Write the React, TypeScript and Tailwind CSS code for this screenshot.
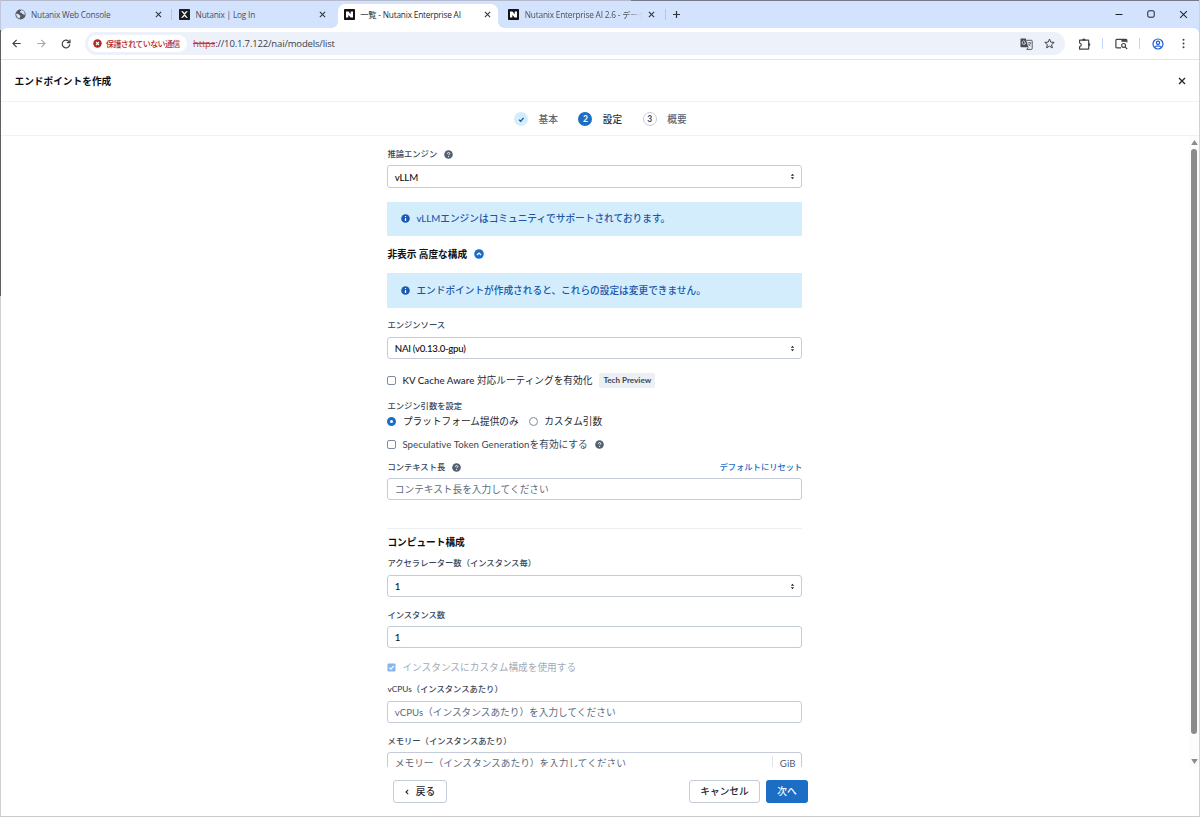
import type { ReactNode } from "react";
import clsx from "clsx";

const UI_FONT = "[font-family:Lato,'Noto_Sans_CJK_JP',sans-serif]";
const CHROME_FONT = "[font-family:'Open_Sans','Noto_Sans_CJK_JP',sans-serif]";

/* ---------- icons ---------- */

function CloseIcon({ size = 7, width = 1.1 }: { size?: number; width?: number }) {
  return (
    <svg width={size} height={size} viewBox="0 0 8 8" fill="none" stroke="currentColor" strokeWidth={width}>
      <path d="M1 1l6 6M7 1L1 7" />
    </svg>
  );
}

function GlobeIcon() {
  return (
    <svg width="11" height="11" viewBox="0 0 11 11">
      <circle cx="5.5" cy="5.5" r="5.1" fill="#54585e" />
      <path d="M1.1 4.8c1.500-.1 2.600.2 3 .9.400.7 1.300.5 1.300 1.300 0 .9-.7 1-.7 2.600C2.500 9.200 1.100 7.200 1.100 4.800z" fill="#d3e3fd" />
      <path d="M6.200 1.100c.2.600-.2 1-.9 1.200-.6.300-.4.900.1 1.200.6.300 1.200.1 1.500.8.300.8 1 .5 1.500 1.100.3.500.8.500 1.500.4C9.900 3.300 8.500 1.300 6.200 1.100z" fill="#d3e3fd" />
    </svg>
  );
}

function NutanixX() {
  return (
    <svg width="11" height="11" viewBox="0 0 11 11">
      <rect width="11" height="11" rx=".8" fill="#1b1c22" />
      <path d="M2.100 2.300h1.700l1.700 1.700 1.700-1.700h1.700L6.300 4.900h-1.600zM2.100 8.700h1.700l1.700-1.700 1.700 1.700h1.700L6.300 6.100h-1.600z" fill="#fff" />
      <path d="M4.700 4.800h1.600v1.400H4.700z" fill="#c9cacd" />
    </svg>
  );
}

function NutanixN() {
  return (
    <svg width="11" height="11" viewBox="0 0 11 11">
      <rect width="11" height="11" rx=".8" fill="#131317" />
      <path d="M2 2.500h2.500l2.200 2.700V2.500H9v6.100H6.700L4.300 5.900v2.700H2z" fill="#fff" />
    </svg>
  );
}

function HelpIcon() {
  return (
    <svg width="9" height="9" viewBox="0 0 9 9">
      <circle cx="4.500" cy="4.500" r="4.300" fill="#526072" />
      <path d="M3.300 3.700c0-1.500 2.500-1.500 2.500-.1 0 .8-1.200.8-1.200 1.600" fill="none" stroke="#fff" strokeWidth="1" />
      <circle cx="4.600" cy="6.500" r=".6" fill="#fff" />
    </svg>
  );
}

function InfoIcon() {
  return (
    <svg width="9" height="9" viewBox="0 0 9 9">
      <circle cx="4.500" cy="4.500" r="4.300" fill="#1a5bb0" />
      <path d="M4.500 1.900v1.200M4.500 4v3" stroke="#fff" strokeWidth="1.200" />
    </svg>
  );
}

function SelectArrows() {
  return (
    <svg width="5" height="7" viewBox="0 0 5 7" fill="#1f2732">
      <path d="M2.500.700L4.200 2.700H.800zM2.500 6.300L.800 4.300h3.400z" />
    </svg>
  );
}

function TranslateIcon() {
  return (
    <svg width="13" height="12" viewBox="0 0 13 12">
      <path d="M.5.500h5.300l2.400 8.800H1.300a.8.800 0 0 1-.8-.8z" fill="#474b50" />
      <path d="M6.500 2.300h5a.7.700 0 0 1 .7.700v7.700a.7.700 0 0 1-.7.700H6.800l1.400-2.100" fill="none" stroke="#474b50" strokeWidth=".9" />
      <path d="M5.700 4.800H4.200M5.500 4.800A1.700 1.700 0 1 1 5 3.500" fill="none" stroke="#ecf1fa" strokeWidth=".8" />
      <path d="M7.600 4.800h3.600M9.400 4v.8M10.700 4.800c-.3 1.500-1.200 2.500-2.300 3.200M8.300 5.700c.5 1.100 1.200 1.700 2.200 2.300" fill="none" stroke="#474b50" strokeWidth=".7" />
    </svg>
  );
}

function StarIcon() {
  return (
    <svg width="11" height="11" viewBox="0 0 11 11" fill="none" stroke="#3f4348" strokeWidth="1">
      <path d="M5.500 1l1.300 3.100 3.400.3-2.600 2.200.8 3.300-2.900-1.800-2.900 1.800.8-3.300L.800 4.400l3.400-.3z" />
    </svg>
  );
}

function PuzzleIcon() {
  return (
    <svg width="13" height="12" viewBox="0 0 13 12" fill="none" stroke="#3f4348" strokeWidth="1.200">
      <path d="M1.600 2.200h8.600a.5.500 0 0 1 .5.500v8a.5.500 0 0 1-.5.500H1.600V8.500c2.200-.2 2.200-3.300 0-3.500z" strokeLinejoin="round" />
      <path d="M4.500 2.200a1.400 1.400 0 0 1 2.800 0zM10.700 5.300a1.300 1.300 0 0 1 0 2.600z" fill="#3f4348" strokeWidth=".5" />
    </svg>
  );
}

function TabSearchIcon() {
  return (
    <svg width="13" height="12" viewBox="0 0 13 12" fill="none" stroke="#3f4348" strokeWidth="1.200">
      <path d="M6 9.900H1.800a.9.900 0 0 1-.9-.9V2.300a.9.900 0 0 1 .9-.9h9.100a.9.900 0 0 1 .9.900v2.200" />
      <path d="M6.400 1.200h5.400v2.600H6.400z" fill="#3f4348" stroke="none" />
      <circle cx="8.600" cy="7.400" r="1.900" />
      <path d="M10 8.800l2.300 2.300" />
    </svg>
  );
}

function ProfileIcon() {
  return (
    <svg width="12" height="12" viewBox="0 0 12 12" fill="none" stroke="#1a5fd6" strokeWidth="1.200">
      <circle cx="6" cy="6" r="5" />
      <circle cx="6" cy="4.800" r="1.600" />
      <path d="M2.600 9.300c1.800-2 5-2 6.800 0" />
    </svg>
  );
}

/* ---------- browser frame ---------- */

type TabProps = { icon: ReactNode; title: string; active?: boolean; divider?: boolean; fade?: boolean };

function BrowserTab({ icon, title, active, divider, fade }: TabProps) {
  return (
    <div className="flex h-full w-[164.6px] shrink-0 items-center">
      <div
        className={clsx(
          "relative flex h-full w-[160px] items-center pb-[3px] pl-[5.500px]",
          active && "rounded-t-[7px] bg-white"
        )}
      >
        {active && (
          <>
            <span className="absolute bottom-0 -left-[6px] h-[6px] w-[6px] bg-[radial-gradient(circle_at_0_0,#d3e3fd_5.500px,#fff_6px)]" />
            <span className="absolute -right-[6px] bottom-0 h-[6px] w-[6px] bg-[radial-gradient(circle_at_100%_0,#d3e3fd_5.500px,#fff_6px)]" />
          </>
        )}
        {icon}
        <span
          className={clsx(
            "ml-[5.500px] w-[118px] text-[8.300px] leading-[14px] tracking-[-0.200px] whitespace-nowrap",
            active ? "text-[#26292d]" : "text-[#4a4f57]",
            fade && "[mask-image:linear-gradient(90deg,#000_85%,transparent)]"
          )}
        >
          {title}
        </span>
        <span className="ml-[5.500px] text-[#303338]">
          <CloseIcon width={1.2} />
        </span>
      </div>
      {divider && <span className="mb-[3px] ml-[2px] h-[11px] w-px bg-[#a8c7fa]" />}
    </div>
  );
}

function TabStrip() {
  return (
    <div className="flex h-[27px] bg-[#d3e3fd] pt-[3px] pl-[8px]">
      <BrowserTab icon={<GlobeIcon />} title="Nutanix Web Console" divider />
      <BrowserTab icon={<NutanixX />} title="Nutanix | Log In" />
      <BrowserTab icon={<NutanixN />} title="一覧 - Nutanix Enterprise AI" active />
      <BrowserTab icon={<NutanixN />} title="Nutanix Enterprise AI 2.6 - データ" divider fade />
      <svg className="mt-[6px] ml-[5px]" width="9" height="9" viewBox="0 0 9 9" stroke="#303338" strokeWidth="1.200">
        <path d="M4.500 1v7M1 4.500h7" />
      </svg>
      <div className="mr-[11px] mb-[4px] ml-auto flex items-center gap-[24px] text-[#202226]">
        <svg width="8" height="8" viewBox="0 0 8 8" stroke="currentColor">
          <path d="M.5 4.500h7" />
        </svg>
        <svg width="8" height="8" viewBox="0 0 8 8" fill="none" stroke="currentColor">
          <rect x=".8" y=".8" width="6.400" height="6.400" rx="1.200" />
        </svg>
        <CloseIcon size={9} width={0.9} />
      </div>
    </div>
  );
}

function Toolbar() {
  return (
    <div className="bg-[#d3e3fd]">
      <div className="flex h-[32px] items-center rounded-t-[6px] border-b border-[#e3e4e6] bg-white pl-[11px]">
        <svg width="9" height="9" viewBox="0 0 9 9" fill="none" stroke="#3f4348" strokeWidth="1.200">
          <path d="M8.700 4.500H1M4.600.800L1 4.500l3.600 3.700" />
        </svg>
        <svg className="ml-[16px]" width="9" height="9" viewBox="0 0 9 9" fill="none" stroke="#a5a8ac" strokeWidth="1.100">
          <path d="M.300 4.500H8M4.400.800L8 4.500 4.400 8.200" />
        </svg>
        <svg className="ml-[15px]" width="10" height="10" viewBox="0 0 10 10" fill="none" stroke="#3f4348" strokeWidth="1.200">
          <path d="M8.800 5.300A3.800 3.800 0 1 1 7.700 2.300L8.800 3.400" />
          <path d="M9 .600v3.100H5.900" />
        </svg>
        <div className="ml-[14px] flex h-[23px] w-[980px] items-center rounded-full bg-[#ecf1fa] pl-[3px]">
          <div className="flex h-[17px] w-[99px] items-center rounded-full bg-white pl-[5px]">
            <svg width="9" height="9" viewBox="0 0 9 9">
              <circle cx="4.500" cy="4.500" r="4.200" fill="#b3261e" />
              <path d="M3 3l3 3M6 3L3 6" stroke="#fff" strokeWidth="1.100" />
            </svg>
            <span className="mt-px ml-[4px] text-[8px] font-medium tracking-[-0.600px] whitespace-nowrap text-[#b3261e]">
              保護されていない通信
            </span>
          </div>
          <span className="mt-[2px] ml-[6px] text-[9.500px] tracking-[-0.160px] whitespace-nowrap text-[#3c4047]">
            <span className="text-[#c5362d] line-through">https</span>://10.1.7.122/nai/models/list
          </span>
          <div className="mr-[10px] ml-auto flex items-center gap-[11px]">
            <TranslateIcon />
            <StarIcon />
          </div>
        </div>
        <div className="ml-[13px] flex items-center">
          <PuzzleIcon />
          <span className="ml-[11px] h-[11px] w-px bg-[#c2d8fb]" />
          <span className="ml-[12px]">
            <TabSearchIcon />
          </span>
          <span className="ml-[11px] h-[11px] w-px bg-[#c2d8fb]" />
          <span className="ml-[12px]">
            <ProfileIcon />
          </span>
          <svg className="ml-[18px]" width="3" height="11" viewBox="0 0 3 11" fill="#3f4348">
            <circle cx="1.500" cy="1.800" r="1" />
            <circle cx="1.500" cy="5.500" r="1" />
            <circle cx="1.500" cy="9.200" r="1" />
          </svg>
        </div>
      </div>
    </div>
  );
}

/* ---------- form pieces ---------- */

function Label({ children, help, className }: { children: ReactNode; help?: boolean; className?: string }) {
  return (
    <div className={clsx("flex h-[16px] items-center text-[8.300px] leading-[16px] font-medium text-[#3a4657]", className)}>
      <span>{children}</span>
      {help && (
        <span className="ml-[7px]">
          <HelpIcon />
        </span>
      )}
    </div>
  );
}

type FieldProps = { value?: string; placeholder?: string; select?: boolean; unit?: string; className?: string; spacing?: string };

function Field({ value, placeholder, select, unit, className, spacing }: FieldProps) {
  return (
    <div
      className={clsx(
        "flex items-center rounded-[3px] border border-[#c5cbd8] bg-white pl-[6.400px] text-[9.680px] leading-[20px]",
        className
      )}
    >
      <span className={clsx(spacing, value ? "font-medium text-[#0c0f14]" : "text-[#5c6b80]")}>
        {value ?? placeholder}
      </span>
      {select && (
        <span className="mr-[6px] ml-auto">
          <SelectArrows />
        </span>
      )}
      {unit && (
        <span className="ml-auto flex h-full items-end pr-[6px]">
          <span className="mr-[7px] h-[17px] w-px bg-[#dfe3ea]" />
          <span className="text-[#526072]">{unit}</span>
        </span>
      )}
    </div>
  );
}

function Checkbox({ checked }: { checked?: boolean }) {
  if (checked) {
    return (
      <svg width="9" height="9" viewBox="0 0 9 9">
        <rect x=".5" y=".5" width="8" height="8" rx="1" fill="#85b5ea" />
        <path d="M2.300 4.600l1.600 1.600 2.900-3.400" fill="none" stroke="#fff" strokeWidth="1.200" />
      </svg>
    );
  }
  return <span className="h-[9px] w-[9px] rounded-[2px] border border-[#7d8b9f] bg-white" />;
}

function Radio({ checked }: { checked?: boolean }) {
  return (
    <span
      className={clsx(
        "h-[9px] w-[9px] rounded-full bg-white",
        checked ? "border-[3px] border-[#1b6dc6]" : "border border-[#7d8b9f]"
      )}
    />
  );
}

function Alert({ children, className }: { children: ReactNode; className?: string }) {
  return (
    <div className={clsx("flex items-center bg-[#d3edfd] pl-[14px] text-[9.680px] font-medium text-[#1a57a8]", className)}>
      <InfoIcon />
      <span className="ml-[6px]">{children}</span>
    </div>
  );
}

function Step({ state, num, label }: { state: "done" | "current" | "next"; num: number; label: string }) {
  return (
    <div className="flex items-center">
      <span
        className={clsx(
          "flex h-[14px] w-[14px] items-center justify-center rounded-full text-[8.500px] leading-none font-bold",
          state === "done" && "bg-[#d3edfd]",
          state === "current" && "bg-[#1b6dc6] text-white",
          state === "next" && "border border-[#c5cbd8] text-[#3a4657]"
        )}
      >
        {state === "done" ? (
          <svg width="7" height="7" viewBox="0 0 7 7" fill="none" stroke="#1a57a8" strokeWidth="1.300">
            <path d="M1.200 3.700l1.500 1.500L5.600 1.800" />
          </svg>
        ) : (
          num
        )}
      </span>
      <span
        className={clsx(
          "ml-[10.500px] text-[9.680px] font-medium",
          state === "current" ? "text-[#2b333e]" : "text-[#5c6674]"
        )}
      >
        {label}
      </span>
    </div>
  );
}

function EndpointForm() {
  return (
    <div className="ml-[386.400px] flex w-[415px] flex-col pt-[10px] *:shrink-0">
      <Label help>推論エンジン</Label>
      <Field value="vLLM" select className="mt-[3px] h-[23px]" spacing="tracking-[-0.150px]" />
      <Alert className="mt-[13.500px] h-[34.500px]">vLLMエンジンはコミュニティでサポートされております。</Alert>
      <div className="mt-[10px] flex h-[16px] items-center text-[9.680px] font-bold text-[#0c0f14]">
        <span>非表示 高度な構成</span>
        <svg className="ml-[7px]" width="10" height="10" viewBox="0 0 10 10">
          <circle cx="5" cy="5" r="4.800" fill="#1b6dc6" />
          <path d="M2.900 6L5 4l2.100 2" fill="none" stroke="#fff" strokeWidth="1.200" />
        </svg>
      </div>
      <Alert className="mt-[11px] h-[35px]">エンドポイントが作成されると、これらの設定は変更できません。</Alert>

      <Label className="mt-[9px]">エンジンソース</Label>
      <Field value="NAI (v0.13.0-gpu)" select className="mt-[4px] h-[22px]" spacing="tracking-[-0.280px]" />

      <div className="mt-[13px] flex h-[16px] items-center text-[9.680px] text-[#1f2732]">
        <Checkbox />
        <span className="ml-[6px]">
          <span className="font-medium tracking-[0.080px]">KV Cache Aware</span> 対応ルーティングを有効化
        </span>
        <span className="ml-[7px] flex h-[15px] items-center rounded-[2px] bg-[#eceff3] px-[4px] text-[8.100px] font-bold text-[#3a4657]">
          Tech Preview
        </span>
      </div>

      <Label className="mt-[10px]">エンジン引数を設定</Label>
      <div className="-mt-px flex h-[16px] items-center text-[9.680px] text-[#1f2732]">
        <Radio checked />
        <span className="ml-[6.500px]">プラットフォーム提供のみ</span>
        <span className="ml-[10px] flex">
          <Radio />
        </span>
        <span className="ml-[6.500px]">カスタム引数</span>
      </div>

      <div className="mt-[7px] flex h-[16px] items-center text-[9.680px] text-[#3a4657]">
        <Checkbox />
        <span className="mr-[7px] ml-[6px]">
          <span className="tracking-[0.050px]">Speculative Token Generation</span>を有効にする
        </span>
        <HelpIcon />
      </div>

      <div className="mt-[7px] flex h-[16px] items-center justify-between">
        <Label help>コンテキスト長</Label>
        <span className="text-[8.300px] leading-[16px] font-medium text-[#1b6dc6]">デフォルトにリセット</span>
      </div>
      <Field placeholder="コンテキスト長を入力してください" className="mt-[3px] h-[22px]" />

      <div className="mt-[28px] h-px bg-[#eceef2]" />
      <div className="mt-[5px] h-[16px] text-[9.680px] leading-[16px] font-bold text-[#0c0f14]">コンピュート構成</div>
      <Label className="mt-[5px]">アクセラレーター数（インスタンス毎）</Label>
      <Field value="1" select className="mt-[4px] h-[22px]" />
      <Label className="mt-[10px]">インスタンス数</Label>
      <Field value="1" className="mt-[3px] h-[22px]" />

      <div className="mt-[11px] flex h-[16px] items-center text-[9.680px] text-[#a3abb8]">
        <Checkbox checked />
        <span className="ml-[6px]">インスタンスにカスタム構成を使用する</span>
      </div>

      <Label className="mt-[6px]">vCPUs（インスタンスあたり）</Label>
      <Field placeholder="vCPUs（インスタンスあたり）を入力してください" className="mt-[4px] h-[22px]" />
      <Label className="mt-[10px]">メモリー（インスタンスあたり）</Label>
      <Field placeholder="メモリー（インスタンスあたり）を入力してください" unit="GiB" className="mt-[3px] h-[22px]" />
    </div>
  );
}

function Scrollbar() {
  return (
    <div className="ml-auto flex w-[10px] flex-col items-center bg-[#fcfcfc] pt-[4px] pb-[3px]">
      <svg width="7" height="5" viewBox="0 0 7 5" fill="#8b8b8b">
        <path d="M3.500 0L6.800 5H.200z" />
      </svg>
      <span className="mt-[4px] h-[585px] w-[6px] rounded-full bg-[#8b8b8b]" />
      <svg className="mt-auto" width="7" height="5" viewBox="0 0 7 5" fill="#8b8b8b">
        <path d="M3.500 5L6.800 0H.200z" />
      </svg>
    </div>
  );
}

export default function App() {
  return (
    <div className="flex h-[817px] w-[1200px] overflow-hidden bg-white">
      <div className="flex w-px shrink-0 flex-col">
        <span className="h-[30px] bg-[#c2c6dc]" />
        <span className="h-[266px] bg-[#5f6064]" />
        <span className="flex-1 bg-[#cfd0d2]" />
      </div>
      <div className="flex min-w-0 flex-1 flex-col border-b border-[#c9cacc]">
        <div className="flex h-px shrink-0">
          <span className="w-[630px] bg-[#b4bacb]" />
          <span className="flex-1 bg-[#73788a]" />
        </div>
        <div className={CHROME_FONT}>
          <TabStrip />
          <Toolbar />
        </div>

        <div className={clsx("flex min-h-0 flex-1 flex-col", UI_FONT)}>
          <div className="flex h-[42px] shrink-0 items-center justify-between border-b border-[#eff1f4] pr-[13px] pl-[13.500px]">
            <span className="mt-[2px] text-[9.680px] font-bold text-[#0c0f14]">エンドポイントを作成</span>
            <span className="text-[#222b38]">
              <CloseIcon size={8} width={1.4} />
            </span>
          </div>
          <div className="flex h-[34px] shrink-0 items-center gap-[20.500px] border-b border-[#eff1f4] pt-px pl-[513px]">
            <Step state="done" num={1} label="基本" />
            <Step state="current" num={2} label="設定" />
            <Step state="next" num={3} label="概要" />
          </div>

          <div className="flex h-[631px] shrink-0 overflow-hidden">
            <EndpointForm />
            <Scrollbar />
          </div>

          <div className="ml-[392px] flex h-[49px] w-[415px] items-center text-[9.680px] font-medium text-[#1f2732]">
            <button className="flex h-[23px] w-[54px] items-center justify-center gap-[7px] rounded-[3px] border border-[#c5cbd8]">
              <svg width="4" height="6" viewBox="0 0 4 6" fill="none" stroke="currentColor" strokeWidth="1.100">
                <path d="M3.200.800L1 3l2.200 2.200" />
              </svg>
              戻る
            </button>
            <button className="ml-auto h-[23px] w-[71px] rounded-[3px] border border-[#c5cbd8]">キャンセル</button>
            <button className="ml-[6px] h-[23px] w-[42px] rounded-[3px] bg-[#1b6dc6] text-white">次へ</button>
          </div>
        </div>
      </div>
      <div className="w-px shrink-0 bg-[#cfd3d6]" />
    </div>
  );
}
